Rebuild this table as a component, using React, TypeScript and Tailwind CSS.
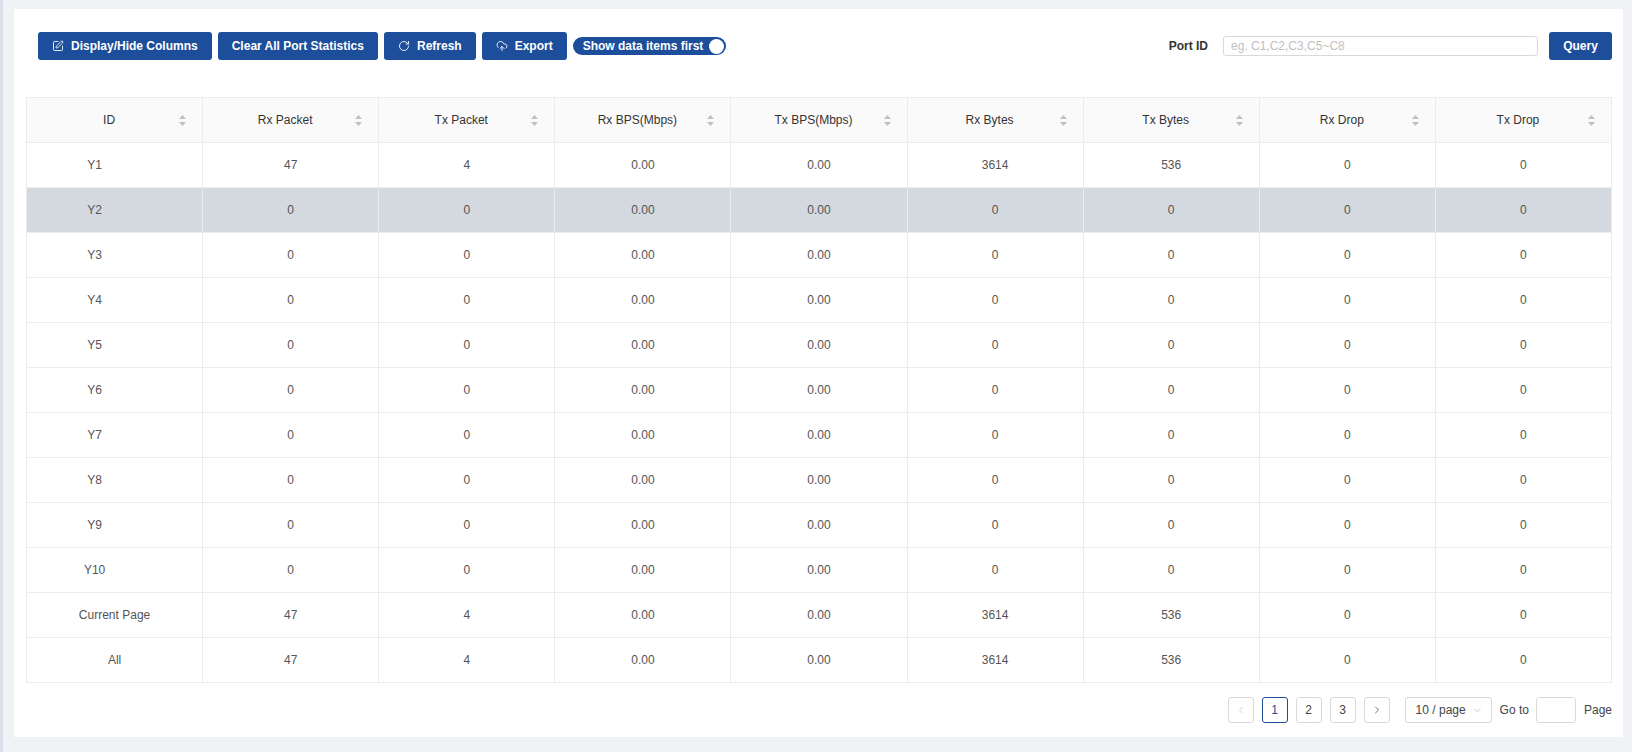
import { SquarePen, RotateCw, CloudUpload, ChevronLeft, ChevronRight, ChevronDown } from "lucide-react";

const columns = ["ID", "Rx Packet", "Tx Packet", "Rx BPS(Mbps)", "Tx BPS(Mbps)", "Rx Bytes", "Tx Bytes", "Rx Drop", "Tx Drop"];

type Row = { id: string; vals: string[]; tag?: boolean };

const zero = ["0", "0", "0.00", "0.00", "0", "0", "0", "0"];
const sum = ["47", "4", "0.00", "0.00", "3614", "536", "0", "0"];

const rows: Row[] = [
  { id: "Y1", vals: sum, tag: true },
  ...Array.from({ length: 9 }, (_, i) => ({ id: `Y${i + 2}`, vals: zero, tag: true })),
  { id: "Current Page", vals: sum },
  { id: "All", vals: sum },
];

function Sorter() {
  return (
    <svg width="7" height="11" viewBox="0 0 7 11" className="ml-1 shrink-0">
      <path d="M3.5 0 L7 4 L0 4 Z" fill="#bfbfbf" />
      <path d="M0 7 L7 7 L3.5 11 Z" fill="#bfbfbf" />
    </svg>
  );
}

function Btn({ icon, label }: { icon?: React.ReactNode; label: string }) {
  return (
    <button className="flex h-[28px] items-center gap-[7px] rounded-[3px] bg-[#1c4e9c] px-[14px] text-[12px] font-bold text-white">
      {icon}
      {label}
    </button>
  );
}

function PageBox({ children, active, dim }: { children: React.ReactNode; active?: boolean; dim?: boolean }) {
  return (
    <div
      className={
        active
          ? "flex h-[26px] w-[26px] items-center justify-center rounded-[3px] border border-[#1c4e9c] text-[12px] text-[#1c4e9c]"
          : dim
          ? "flex h-[26px] w-[26px] items-center justify-center rounded-[3px] border border-[#d9d9d9] text-[#c8c8c8]"
          : "flex h-[26px] w-[26px] items-center justify-center rounded-[3px] border border-[#d9d9d9] text-[12px] text-[#444]"
      }
    >
      {children}
    </div>
  );
}

export default function App() {
  return (
    <div className="flex h-[752px] w-[1632px] bg-[#f0f2f5] font-['Liberation_Sans',Arial,sans-serif]">
      <div className="w-[3px] bg-[#dcdde6]" />
      <div className="ml-[11px] mt-[9px] h-[728px] w-[1609px] bg-white pl-3 pr-[11px] pt-[23px]">
        {/* toolbar */}
        <div className="flex h-[28px] items-center">
          <div className="flex items-center gap-[6px] pl-3">
            <Btn icon={<SquarePen size={12} strokeWidth={1.75} />} label="Display/Hide Columns" />
            <Btn label="Clear All Port Statistics" />
            <Btn icon={<RotateCw size={12} strokeWidth={1.75} />} label="Refresh" />
            <Btn icon={<CloudUpload size={12} strokeWidth={1.75} />} label="Export" />
            <div className="flex h-[18px] items-center rounded-full bg-[#1c4e9c] pl-[10px] pr-[2px] text-[12px] font-bold text-white">
              <span>Show data items first</span>
              <span className="ml-[6px] h-[15px] w-[15px] rounded-full bg-white" />
            </div>
          </div>
          <div className="ml-auto flex items-center">
            <span className="text-[12px] font-bold text-[#333]">Port ID</span>
            <input
              className="ml-[15px] h-[20px] w-[315px] rounded-[3px] border border-[#d9d9d9] px-[7px] text-[12px] outline-none placeholder:text-[#bfbfbf]"
              placeholder="eg. C1,C2,C3,C5~C8"
            />
            <button className="ml-[11px] flex h-[28px] w-[63px] items-center justify-center rounded-[3px] bg-[#1c4e9c] text-[12px] font-bold text-white">
              Query
            </button>
          </div>
        </div>

        {/* table */}
        <div className="mt-[37px] border-l border-t border-[#ececec] text-[12px]">
          <div className="grid h-[45px] grid-cols-9 bg-[#fafafa] text-[#333]">
            {columns.map((c) => (
              <div key={c} className="flex items-center border-b border-r border-[#ececec] px-4">
                <span className="flex-1 text-center">{c}</span>
                <Sorter />
              </div>
            ))}
          </div>
          {rows.map((r, i) => (
            <div key={r.id} className={i === 1 ? "grid h-[45px] grid-cols-9 bg-[#d3d9df] text-[#555]" : "grid h-[45px] grid-cols-9 text-[#555]"}>
              <div className={r.tag ? "flex items-center justify-center border-b border-r border-[#ececec] pl-4 pr-[56px]" : "flex items-center justify-center border-b border-r border-[#ececec] px-4"}>
                {r.id}
              </div>
              {r.vals.map((v, j) => (
                <div key={j} className="flex items-center justify-center border-b border-r border-[#ececec]">
                  {v}
                </div>
              ))}
            </div>
          ))}
        </div>

        {/* pagination */}
        <div className="mt-[14px] flex items-center justify-end text-[12px] text-[#444]">
          <PageBox dim>
            <ChevronLeft size={12} strokeWidth={1.5} />
          </PageBox>
          <div className="ml-[8px]">
            <PageBox active>1</PageBox>
          </div>
          <div className="ml-[8px]">
            <PageBox>2</PageBox>
          </div>
          <div className="ml-[8px]">
            <PageBox>3</PageBox>
          </div>
          <div className="ml-[8px]">
            <PageBox>
              <ChevronRight size={12} strokeWidth={1.5} />
            </PageBox>
          </div>
          <div className="ml-[15px] flex h-[26px] w-[87px] items-center rounded-[3px] border border-[#d9d9d9] pl-[10px] pr-[8px]">
            <span>10 / page</span>
            <ChevronDown size={11} className="ml-auto text-[#bfbfbf]" />
          </div>
          <span className="ml-[8px]">Go to</span>
          <div className="ml-[7px] h-[26px] w-[40px] rounded-[3px] border border-[#d9d9d9]" />
          <span className="ml-[8px]">Page</span>
        </div>
      </div>
    </div>
  );
}
